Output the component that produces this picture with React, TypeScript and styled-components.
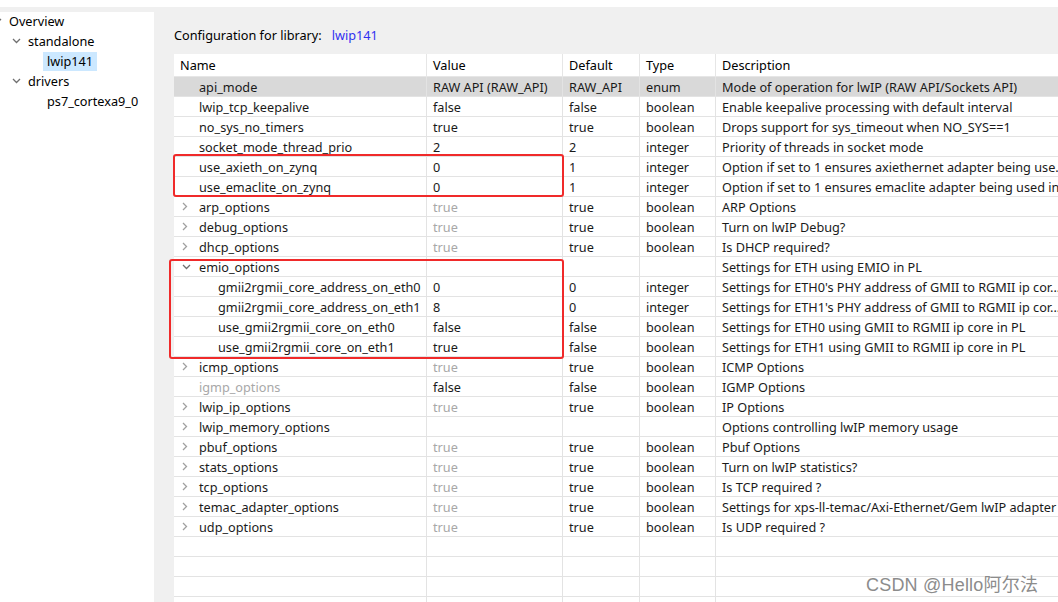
import React from 'react';
import styled, { createGlobalStyle } from 'styled-components';

const GlobalStyle = createGlobalStyle`
  html, body {
    margin: 0;
    padding: 0;
    background: #f0f0f0;
    font-family: 'Noto Sans', 'Liberation Sans', sans-serif;
    font-size: 12.7px;
    color: #1a1a1a;
  }
`;

type Row = {
  name: string;
  value?: string;
  def?: string;
  type?: string;
  desc?: string;
  level?: 0 | 1;
  expander?: 'closed' | 'open';
  muted?: boolean;
  mutedName?: boolean;
  selected?: boolean;
};

const rows: Row[] = [
  { name: 'api_mode', value: 'RAW API (RAW_API)', def: 'RAW_API', type: 'enum', desc: 'Mode of operation for lwIP (RAW API/Sockets API)', selected: true },
  { name: 'lwip_tcp_keepalive', value: 'false', def: 'false', type: 'boolean', desc: 'Enable keepalive processing with default interval' },
  { name: 'no_sys_no_timers', value: 'true', def: 'true', type: 'boolean', desc: 'Drops support for sys_timeout when NO_SYS==1' },
  { name: 'socket_mode_thread_prio', value: '2', def: '2', type: 'integer', desc: 'Priority of threads in socket mode' },
  { name: 'use_axieth_on_zynq', value: '0', def: '1', type: 'integer', desc: 'Option if set to 1 ensures axiethernet adapter being use...' },
  { name: 'use_emaclite_on_zynq', value: '0', def: '1', type: 'integer', desc: 'Option if set to 1 ensures emaclite adapter being used in...' },
  { name: 'arp_options', value: 'true', def: 'true', type: 'boolean', desc: 'ARP Options', expander: 'closed', muted: true },
  { name: 'debug_options', value: 'true', def: 'true', type: 'boolean', desc: 'Turn on lwIP Debug?', expander: 'closed', muted: true },
  { name: 'dhcp_options', value: 'true', def: 'true', type: 'boolean', desc: 'Is DHCP required?', expander: 'closed', muted: true },
  { name: 'emio_options', desc: 'Settings for ETH using EMIO in PL', expander: 'open' },
  { name: 'gmii2rgmii_core_address_on_eth0', value: '0', def: '0', type: 'integer', desc: "Settings for ETH0's PHY address of GMII to RGMII ip cor...", level: 1 },
  { name: 'gmii2rgmii_core_address_on_eth1', value: '8', def: '0', type: 'integer', desc: "Settings for ETH1's PHY address of GMII to RGMII ip cor...", level: 1 },
  { name: 'use_gmii2rgmii_core_on_eth0', value: 'false', def: 'false', type: 'boolean', desc: 'Settings for ETH0 using GMII to RGMII ip core in PL', level: 1 },
  { name: 'use_gmii2rgmii_core_on_eth1', value: 'true', def: 'false', type: 'boolean', desc: 'Settings for ETH1 using GMII to RGMII ip core in PL', level: 1 },
  { name: 'icmp_options', value: 'true', def: 'true', type: 'boolean', desc: 'ICMP Options', expander: 'closed', muted: true },
  { name: 'igmp_options', value: 'false', def: 'false', type: 'boolean', desc: 'IGMP Options', mutedName: true },
  { name: 'lwip_ip_options', value: 'true', def: 'true', type: 'boolean', desc: 'IP Options', expander: 'closed', muted: true },
  { name: 'lwip_memory_options', desc: 'Options controlling lwIP memory usage', expander: 'closed' },
  { name: 'pbuf_options', value: 'true', def: 'true', type: 'boolean', desc: 'Pbuf Options', expander: 'closed', muted: true },
  { name: 'stats_options', value: 'true', def: 'true', type: 'boolean', desc: 'Turn on lwIP statistics?', expander: 'closed', muted: true },
  { name: 'tcp_options', value: 'true', def: 'true', type: 'boolean', desc: 'Is TCP required ?', expander: 'closed', muted: true },
  { name: 'temac_adapter_options', value: 'true', def: 'true', type: 'boolean', desc: 'Settings for xps-ll-temac/Axi-Ethernet/Gem lwIP adapter', expander: 'closed', muted: true },
  { name: 'udp_options', value: 'true', def: 'true', type: 'boolean', desc: 'Is UDP required ?', expander: 'closed', muted: true },
];

const Chevron = ({ open }: { open?: boolean }) =>
  open ? (
    <svg width="9" height="6" viewBox="0 0 9 6">
      <path d="M1 1 L4.5 4.5 L8 1" fill="none" stroke="#707070" strokeWidth="1.3" />
    </svg>
  ) : (
    <svg width="6" height="9" viewBox="0 0 6 9">
      <path d="M1 1 L4.5 4.5 L1 8" fill="none" stroke="#a0a0a0" strokeWidth="1.3" />
    </svg>
  );

const Page = styled.div`
  height: 602px;
  display: flex;
  flex-direction: column;
  overflow: hidden;
  position: relative;
`;

const TopStrip = styled.div`
  height: 7px;
  background: #ffffff;
  flex: none;
`;

const Body = styled.div`
  flex: 1;
  display: flex;
  padding-top: 5px;
  min-height: 0;
`;

const TreePane = styled.div`
  width: 154px;
  flex: none;
  background: #ffffff;
  overflow: hidden;
`;

const TreeItem = styled.div<{ $indent: number }>`
  height: 20px;
  display: flex;
  align-items: center;
  padding-bottom: 2px;
  box-sizing: border-box;
  margin-left: ${({ $indent }) => $indent}px;
  color: #000;
`;

const TreeToggle = styled.span`
  width: 16px;
  flex: none;
  display: inline-flex;
  justify-content: center;
  align-items: center;
`;

const TreeLabel = styled.span<{ $selected?: boolean }>`
  padding: 1px 4px 2px;
  background: ${({ $selected }) => ($selected ? '#cce8ff' : 'transparent')};
  line-height: 16px;
`;

const Main = styled.div`
  flex: 1;
  min-width: 0;
  padding-left: 20px;
  overflow: hidden;
`;

const ConfigLine = styled.div`
  height: 42px;
  display: flex;
  align-items: center;
  padding-top: 4px;
  box-sizing: border-box;
  gap: 10px;
  color: #000;
`;

const LibLink = styled.span`
  color: #3030f0;
`;

const Table = styled.div`
  width: 944px;
  background: #ffffff;
`;

const cols = '253px 136px 77px 76px 402px';

const HeaderRow = styled.div`
  display: grid;
  grid-template-columns: ${cols};
  height: 23px;
  border-bottom: 1px solid #e6e6e6;
  box-sizing: border-box;
`;

const HeaderCell = styled.div`
  display: flex;
  align-items: center;
  padding-left: 6px;
  border-right: 1px solid #e6e6e6;
  color: #000;
`;

const DataRow = styled.div<{ $selected?: boolean }>`
  display: grid;
  grid-template-columns: ${cols};
  height: 20px;
  box-sizing: border-box;
  border-bottom: 1px solid #e3e3e3;
  background: ${({ $selected }) => ($selected ? '#d9d9d9' : '#ffffff')};
`;

const Cell = styled.div<{ $muted?: boolean }>`
  display: flex;
  align-items: center;
  padding-left: 6px;
  border-right: 1px solid #e3e3e3;
  white-space: nowrap;
  overflow: hidden;
  color: ${({ $muted }) => ($muted ? '#a8a8a8' : '#1a1a1a')};
`;

const NameCell = styled(Cell)<{ $level: number }>`
  padding-left: ${({ $level }) => 7 + $level * 19}px;
`;

const Expander = styled.span`
  width: 17px;
  flex: none;
  display: inline-flex;
  align-items: center;
  justify-content: flex-start;
  padding-left: 1px;
`;

const Highlight = styled.div<{ $x: number; $y: number; $w: number; $h: number }>`
  position: absolute;
  left: ${({ $x }) => $x}px;
  top: ${({ $y }) => $y}px;
  width: ${({ $w }) => $w}px;
  height: ${({ $h }) => $h}px;
  border: 2px solid #f02a2a;
  border-radius: 3px;
  box-sizing: border-box;
  pointer-events: none;
`;

const Watermark = styled.div`
  position: absolute;
  left: 866px;
  top: 570px;
  font-family: 'Liberation Sans', 'Noto Sans CJK SC', sans-serif;
  font-size: 18px;
  color: #8c8c8c;
  text-shadow: 0 0 2px #ffffff, 0 0 1px #ffffff;
  letter-spacing: 0.2px;
`;

export default function App() {
  return (
    <Page>
      <GlobalStyle />
      <TopStrip />
      <Body>
        <TreePane>
          <TreeItem $indent={-11}>
            <TreeToggle>
              <Chevron open />
            </TreeToggle>
            <TreeLabel>Overview</TreeLabel>
          </TreeItem>
          <TreeItem $indent={8}>
            <TreeToggle>
              <Chevron open />
            </TreeToggle>
            <TreeLabel>standalone</TreeLabel>
          </TreeItem>
          <TreeItem $indent={43}>
            <TreeLabel $selected>lwip141</TreeLabel>
          </TreeItem>
          <TreeItem $indent={8}>
            <TreeToggle>
              <Chevron open />
            </TreeToggle>
            <TreeLabel>drivers</TreeLabel>
          </TreeItem>
          <TreeItem $indent={43}>
            <TreeLabel>ps7_cortexa9_0</TreeLabel>
          </TreeItem>
        </TreePane>
        <Main>
          <ConfigLine>
            <span>Configuration for library:</span>
            <LibLink>lwip141</LibLink>
          </ConfigLine>
          <Table>
            <HeaderRow>
              <HeaderCell>Name</HeaderCell>
              <HeaderCell>Value</HeaderCell>
              <HeaderCell>Default</HeaderCell>
              <HeaderCell>Type</HeaderCell>
              <HeaderCell>Description</HeaderCell>
            </HeaderRow>
            {rows.map((r) => (
              <DataRow key={r.name} $selected={r.selected}>
                <NameCell $level={r.level ?? 0} $muted={r.mutedName}>
                  <Expander>{r.expander && <Chevron open={r.expander === 'open'} />}</Expander>
                  {r.name}
                </NameCell>
                <Cell $muted={r.muted}>{r.value}</Cell>
                <Cell>{r.def}</Cell>
                <Cell>{r.type}</Cell>
                <Cell>{r.desc}</Cell>
              </DataRow>
            ))}
            {[0, 1, 2, 3].map((i) => (
              <DataRow key={`empty-${i}`}>
                <Cell />
                <Cell />
                <Cell />
                <Cell />
                <Cell />
              </DataRow>
            ))}
          </Table>
        </Main>
      </Body>
      <Highlight $x={173} $y={154} $w={391} $h={43} />
      <Highlight $x={169} $y={259} $w={395} $h={100} />
      <Watermark>CSDN @Hello阿尔法</Watermark>
    </Page>
  );
}
